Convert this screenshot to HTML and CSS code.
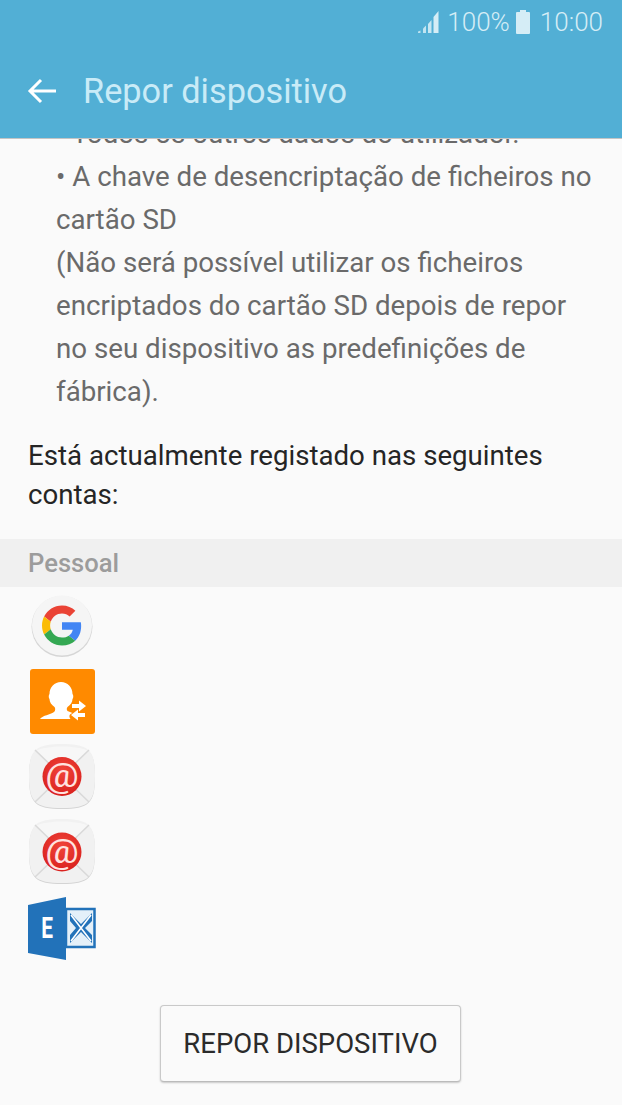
FILE: index.html
```html
<!DOCTYPE html>
<html lang="pt">
<head>
    <meta charset="UTF-8">
    <meta name="viewport" content="width=device-width, initial-scale=1.0">
    <title>Repor dispositivo</title>
    <link rel="stylesheet" href="styles.css">
</head>
<body>
    <header class="app-header">
        <div class="status-bar">
            <svg class="signal-icon" viewBox="0 0 22 24" width="22" height="24">
                <path d="M0 23h2.500v-2.500l-2.500 1z" opacity="0.8"/>
                <path d="M5 23h3v-7.500l-3 3z" opacity="0.85"/>
                <path d="M10 23h3.500v-13l-3.500 4z" opacity="0.9"/>
                <path d="M15.500 23h5v-22l-5 6z"/>
            </svg>
            <span class="battery-text">100%</span>
            <svg class="battery-icon" viewBox="0 0 14 24" width="14" height="24">
                <path d="M4 0h6v2h3a1 1 0 0 1 1 1v20a1 1 0 0 1-1 1h-12a1 1 0 0 1-1-1v-20a1 1 0 0 1 1-1h3z"/>
            </svg>
            <span class="clock">10:00</span>
        </div>
        <div class="title-bar">
            <svg class="back-icon" viewBox="0 0 30 26" width="30" height="26">
                <path d="M29 13H3M14 2L3 13l11 11" fill="none" stroke="#fff" stroke-width="3"/>
            </svg>
            <h1>Repor dispositivo</h1>
        </div>
    </header>

    <main class="content">
        <div class="scroll-area">
            <ul class="data-list">
                <li>• Todos os outros dados do utilizador.</li>
                <li>• A chave de desencriptação de ficheiros no cartão SD<br>(Não será possível utilizar os ficheiros encriptados do cartão SD depois de repor no seu dispositivo as predefinições de fábrica).</li>
            </ul>
            <p class="accounts-intro">Está actualmente registado nas seguintes contas:</p>
            <div class="section-label">Pessoal</div>
            <div class="account-list">
                <!-- Google -->
                <div class="account-row">
                    <svg viewBox="0 0 66 66" width="66" height="66">
                        <circle cx="33" cy="32.500" r="30.500" fill="#d6d6d6"/>
                        <circle cx="33" cy="31.500" r="30" fill="#f5f5f5"/>
                        <g transform="translate(13 11.500) scale(0.8333)">
                            <path fill="#ea4335" d="M24 9.500c3.540 0 6.710 1.220 9.210 3.600l6.850-6.850C35.900 2.380 30.470 0 24 0 14.620 0 6.510 5.380 2.560 13.220l7.980 6.190C12.430 13.720 17.740 9.500 24 9.500z"/>
                            <path fill="#4285f4" d="M46.980 24.550c0-1.570-.15-3.090-.38-4.550H24v9.020h12.940c-.58 2.960-2.260 5.480-4.780 7.180l7.730 6c4.510-4.180 7.090-10.360 7.090-17.650z"/>
                            <path fill="#fbbc05" d="M10.530 28.590c-.5-1.450-.78-2.990-.78-4.590s.27-3.140.78-4.590l-7.980-6.190C.92 16.460 0 20.120 0 24c0 3.880.92 7.540 2.560 10.780l7.970-6.190z"/>
                            <path fill="#34a853" d="M24 48c6.480 0 11.930-2.130 15.890-5.810l-7.730-6c-2.150 1.450-4.920 2.300-8.160 2.300-6.260 0-11.570-4.220-13.470-9.910l-7.980 6.190C6.510 42.620 14.620 48 24 48z"/>
                        </g>
                    </svg>
                </div>
                <!-- contactos -->
                <div class="account-row">
                    <svg viewBox="0 0 66 66" width="66" height="66">
                        <rect x="1" y="0" width="65" height="65" rx="3" fill="#ff8a00"/>
                        <path d="M11 50c3-4 10-4 14-7 1.500-1 1.500-4 .5-5-3-2-5-5-5-8-1-1-1-4 0-5 0-7 5-12 11.500-12s11.500 5 11.500 12c1 1 1 4 0 5 0 3-2 6-5 8-1 1-1 3 0 4l5 2c-3 1-4 3-2 6z" fill="#fff"/>
                        <path d="M43 35h7v-3.500l7 5.500-7 5.500v-3.500h-7zM56 44h-7v-3.500l-7 5.500 7 5.500v-3.500h7z" fill="#fff"/>
                    </svg>
                </div>
                <!-- email -->
                <div class="account-row">
                    <svg viewBox="0 0 66 66" width="66" height="66">
                        <defs>
                            <radialGradient id="mailRed" cx="50%" cy="35%" r="70%">
                                <stop offset="0" stop-color="#f0443a"/>
                                <stop offset="1" stop-color="#d81f1c"/>
                            </radialGradient>
                        </defs>
                        <path d="M33 1C60 1 66 7 66 33S60 65 33 65 0 59 0 33 6 1 33 1z" fill="#d4d4d4"/>
                        <path d="M33 0C60 0 66 6 66 32S60 64 33 64 0 58 0 32 6 0 33 0z" fill="#f1f1f1"/>
                        <path d="M7 7L33 32 59 7C50 1 16 1 7 7z" fill="#f7f7f7"/>
                        <path d="M6 6l54 52M60 6L6 58" stroke="#d9d9d9" stroke-width="1.500"/>
                        <circle cx="33" cy="32.500" r="19.500" fill="url(#mailRed)"/>
                        <text class="at-sign" transform="translate(33 43) scale(1.1 0.95)" text-anchor="middle">@</text>
                    </svg>
                </div>
                <div class="account-row">
                    <svg viewBox="0 0 66 66" width="66" height="66">
                        <defs>
                            <radialGradient id="mailRed2" cx="50%" cy="35%" r="70%">
                                <stop offset="0" stop-color="#f0443a"/>
                                <stop offset="1" stop-color="#d81f1c"/>
                            </radialGradient>
                        </defs>
                        <path d="M33 1C60 1 66 7 66 33S60 65 33 65 0 59 0 33 6 1 33 1z" fill="#d4d4d4"/>
                        <path d="M33 0C60 0 66 6 66 32S60 64 33 64 0 58 0 32 6 0 33 0z" fill="#f1f1f1"/>
                        <path d="M7 7L33 32 59 7C50 1 16 1 7 7z" fill="#f7f7f7"/>
                        <path d="M6 6l54 52M60 6L6 58" stroke="#d9d9d9" stroke-width="1.500"/>
                        <circle cx="33" cy="33" r="19.500" fill="url(#mailRed2)"/>
                        <text class="at-sign" transform="translate(33 43.500) scale(1.1 0.95)" text-anchor="middle">@</text>
                    </svg>
                </div>
                <!-- exchange -->
                <div class="account-row exchange-row">
                    <svg viewBox="0 0 68 66" width="68" height="66">
                        <path d="M38 15h28.500v38h-28.500z" fill="#e4f0f9" stroke="#2272b9" stroke-width="2.500"/>
                        <path d="M42 19l11 11 11-11v8l-7 7 7 7v8L53 38 42 49v-8l6-7-6-7z" fill="#2272b9"/>
                        <path d="M43 21l20 26M63 21L43 47" stroke="#fff" stroke-width="1.600"/>
                        <path d="M0 11l38-8v63l-38-7z" fill="#2272b9"/>
                        <text class="exchange-e" transform="translate(19 44) scale(0.72 1)" text-anchor="middle">E</text>
                    </svg>
                </div>
            </div>
        </div>
        <div class="actions">
            <button class="reset-btn" type="button">REPOR DISPOSITIVO</button>
        </div>
    </main>
</body>
</html>
```

FILE: styles.css
```css
html, body {
    margin: 0;
    padding: 0;
    height: 100%;
}
body {
    width: 622px;
    height: 1105px;
    overflow: hidden;
    display: flex;
    flex-direction: column;
    font-family: Roboto, "Liberation Sans", sans-serif;
    background-color: #fafafa;
    color: #252525;
}
.app-header {
    flex: 0 0 138px;
    background-color: #52afd5;
    border-bottom: 1px solid #c4c4c4;
    box-sizing: border-box;
    position: relative;
    z-index: 1;
}
.status-bar {
    height: 44px;
    display: flex;
    justify-content: flex-end;
    align-items: center;
    padding-right: 19px;
    color: #d5edf6;
    font-size: 26px;
    font-weight: 300;
    fill: #d5edf6;
}
.signal-icon {
    margin-right: 7px;
}
.battery-icon {
    margin: 0 10px 0 6px;
}
.title-bar {
    display: flex;
    align-items: center;
    height: 94px;
    padding-left: 27px;
}
.back-icon {
    margin-right: 26px;
}
.title-bar h1 {
    margin: 0;
    font-size: 34.3px;
    font-weight: 400;
    color: #c9ebf7;
}
.content {
    flex: 1;
    display: flex;
    flex-direction: column;
    min-height: 0;
}
.scroll-area {
    flex: 1;
    min-height: 0;
    overflow: hidden;
}
.data-list {
    list-style: none;
    margin: -27px 0 0;
    padding: 0 28px;
    color: #6a6a6a;
    font-size: 27.7px;
    line-height: 43px;
}
.data-list li {
    padding-left: 28px;
}
.accounts-intro {
    margin: 23px 28px 25px;
    font-size: 27.65px;
    line-height: 39px;
}
.section-label {
    background-color: #f0f0f0;
    color: #9c9c9c;
    font-size: 25.6px;
    font-weight: 500;
    line-height: 48px;
    padding-left: 28px;
}
.account-list {
    display: flex;
    flex-direction: column;
    gap: 9px;
    padding: 7px 0 0 29px;
}
.account-row {
    height: 66px;
    display: flex;
}
.exchange-row {
    margin-left: -1px;
}
.at-sign {
    font-size: 34px;
    font-weight: 400;
    fill: #ffe3e0;
    font-family: Roboto, sans-serif;
}
.exchange-e {
    font-size: 29px;
    font-weight: 700;
    fill: #fff;
    font-family: Roboto, sans-serif;
}
.actions {
    display: flex;
    justify-content: center;
    padding-bottom: 23px;
}
.reset-btn {
    width: 301px;
    height: 77px;
    margin-left: -1px;
    background-color: #fafafa;
    border: 1px solid #c9c9c9;
    border-bottom-color: #bbb;
    border-radius: 4px;
    box-shadow: 0 1px 2px rgba(0, 0, 0, 0.2);
    color: #2b2b2b;
    font-family: Roboto, "Liberation Sans", sans-serif;
    font-size: 27.5px;
}
```
